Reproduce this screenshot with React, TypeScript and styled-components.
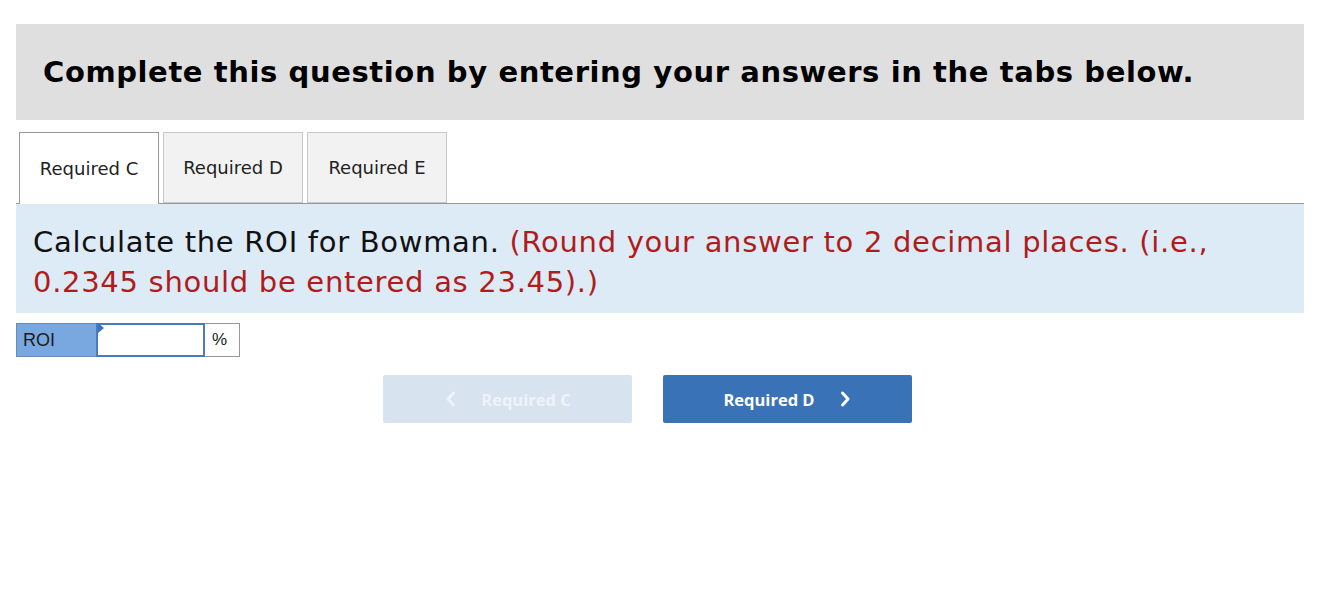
import React from "react";
import styled, { createGlobalStyle } from "styled-components";

const Global = createGlobalStyle`
  html, body { margin: 0; padding: 0; background: #fff; }
  body { font-family: "DejaVu Sans", Verdana, sans-serif; }
`;

const Page = styled.div`
  padding: 24px 24px 0 16px;
  width: 1288px;
`;

const Header = styled.div`
  background: #dfdfdf;
  height: 96px;
  display: flex;
  align-items: center;
  padding-left: 27px;
  box-sizing: border-box;
`;

const Title = styled.h1`
  margin: 0;
  font-family: "DejaVu Sans", Verdana, sans-serif;
  font-weight: bold;
  font-size: 29px;
  color: #000;
  letter-spacing: 0.6px;
`;

const TabBar = styled.div`
  margin-top: 12px;
  display: flex;
  gap: 4px;
  padding-left: 3px;
  border-bottom: 1px solid #999;
  height: 71px;
  box-sizing: content-box;
`;

const Tab = styled.div<{ $active?: boolean }>`
  width: 140px;
  height: ${(p) => (p.$active ? "72px" : "71px")};
  box-sizing: border-box;
  border: 1px solid ${(p) => (p.$active ? "#999" : "#c8c8c8")};
  border-bottom: ${(p) => (p.$active ? "none" : "1px solid #c8c8c8")};
  background: ${(p) => (p.$active ? "#fff" : "#f2f2f2")};
  display: flex;
  align-items: center;
  justify-content: center;
  font-size: 18px;
  color: #222;
  position: relative;
  z-index: ${(p) => (p.$active ? 1 : 0)};
`;

const Question = styled.div`
  background: #ddebf7;
  height: 109px;
  box-sizing: border-box;
  padding: 18px 17px 0 17px;
  font-size: 29px;
  line-height: 40px;
  letter-spacing: 0.7px;
  color: #111;
`;

const Hint = styled.span`
  color: #b01c1c;
`;

const InputRow = styled.div`
  margin-top: 10px;
  display: flex;
  height: 34px;
`;

const Label = styled.div`
  width: 80px;
  box-sizing: border-box;
  background: #79a8e0;
  border: 1px solid #6a8bb5;
  border-right: none;
  font-family: "Liberation Sans", Arial, sans-serif;
  font-size: 18px;
  color: #1c1c1c;
  display: flex;
  align-items: center;
  padding-left: 6px;
`;

const InputBox = styled.div`
  position: relative;
  width: 109px;
  box-sizing: border-box;
  border: 2px solid #4a7bc1;
  background: #fff;
`;

const Corner = styled.div`
  position: absolute;
  left: 0;
  top: 0;
  width: 0;
  height: 0;
  border-top: 5px solid transparent;
  border-bottom: 5px solid transparent;
  border-left: 6px solid #3b6fc0;
  transform: translateY(-2px);
`;

const Unit = styled.div`
  width: 35px;
  box-sizing: border-box;
  border: 1px solid #999;
  border-left: none;
  background: #fff;
  font-family: "Liberation Sans", Arial, sans-serif;
  font-size: 17px;
  color: #222;
  display: flex;
  align-items: center;
  padding-left: 7px;
`;

const NavRow = styled.div`
  margin-top: 18px;
  display: flex;
  gap: 31px;
  padding-left: 367px;
`;

const NavButton = styled.button<{ $disabled?: boolean }>`
  width: 249px;
  height: 48px;
  border: none;
  border-radius: 2px;
  background: ${(p) => (p.$disabled ? "#d8e3f0" : "#3a72b8")};
  color: ${(p) => (p.$disabled ? "#eef3f9" : "#fff")};
  font-family: "Open Sans", "Liberation Sans", sans-serif;
  font-weight: bold;
  font-size: 16.5px;
  display: flex;
  align-items: center;
  justify-content: center;
  gap: 24px;
  padding: 0;
  cursor: pointer;
`;

const Chevron = ({ dir }: { dir: "left" | "right" }) => (
  <svg width="13" height="18" viewBox="0 0 13 18">
    <path
      d={dir === "left" ? "M9.5 3 L4 9 L9.5 15" : "M3.5 3 L9 9 L3.5 15"}
      fill="none"
      stroke="currentColor"
      strokeWidth="3"
      strokeLinecap="round"
      strokeLinejoin="round"
    />
  </svg>
);

export default function App() {
  return (
    <Page>
      <Global />
      <Header>
        <Title>Complete this question by entering your answers in the tabs below.</Title>
      </Header>
      <TabBar>
        <Tab $active>Required C</Tab>
        <Tab>Required D</Tab>
        <Tab>Required E</Tab>
      </TabBar>
      <Question>
        Calculate the ROI for Bowman.{" "}
        <Hint>
          (Round your answer to 2 decimal places. (i.e., 0.2345 should be entered as 23.45).)
        </Hint>
      </Question>
      <InputRow>
        <Label>ROI</Label>
        <InputBox>
          <Corner />
        </InputBox>
        <Unit>%</Unit>
      </InputRow>
      <NavRow>
        <NavButton $disabled>
          <Chevron dir="left" />
          <span>Required C</span>
        </NavButton>
        <NavButton>
          <span>Required D</span>
          <Chevron dir="right" />
        </NavButton>
      </NavRow>
    </Page>
  );
}
